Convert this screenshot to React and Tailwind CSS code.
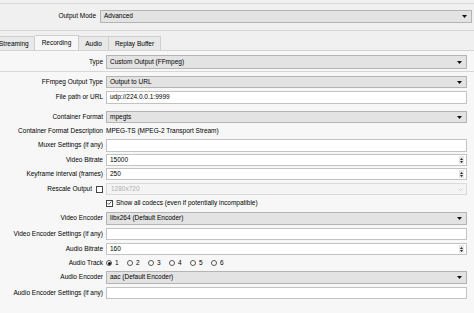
import React from 'react'

const font = { fontFamily: '"Liberation Sans", Arial, sans-serif' }

function Arrow() {
  return (
    <svg width="5" height="3" viewBox="0 0 5 3" className="shrink-0">
      <path d="M0 0h5L2.5 3z" fill="#111" />
    </svg>
  )
}

function Combo({ value, h = 'h-[12px]', pr = 'pr-[4px]' }) {
  return (
    <div className={`flex-1 ${h} flex items-center justify-between bg-[#e3e3e3] border border-[#b4b4b4] pl-[3px] ${pr}`}>
      <span className="leading-none">{value}</span>
      <Arrow />
    </div>
  )
}

function Input({ value = '', h = 'h-[12px]' }) {
  return (
    <div className={`flex-1 ${h} flex items-center bg-white border border-[#c3c3c3] pl-[3px]`}>
      <span className="leading-none">{value}</span>
    </div>
  )
}

function Spin({ value }) {
  return (
    <div className="flex-1 h-[12px] flex items-center justify-between bg-white border border-[#c3c3c3] pl-[3px] pr-[2px]">
      <span className="leading-none">{value}</span>
      <div className="w-[5px] h-[8px] bg-[#e6e6e6] flex flex-col items-center justify-center gap-[1px]">
        <svg width="3" height="2" viewBox="0 0 3 2"><path d="M0 2h3L1.5 0z" fill="#222" /></svg>
        <svg width="3" height="2" viewBox="0 0 3 2"><path d="M0 0h3L1.5 2z" fill="#222" /></svg>
      </div>
    </div>
  )
}

function Row({ label, mt, h = 'h-[12px]', children }) {
  return (
    <div className={`flex items-center ${mt} ${h}`}>
      <div className="w-[106px] shrink-0 text-right pr-[3px] leading-none whitespace-nowrap">{label}</div>
      <div className="flex-1 flex items-center h-full mr-[7px]">{children}</div>
    </div>
  )
}

function Check({ checked }) {
  return (
    <div className="w-[7px] h-[7px] bg-white border border-[#444] flex items-center justify-center shrink-0">
      {checked && (
        <svg width="6" height="6" viewBox="0 0 6 6">
          <path d="M0.8 3.2 2.3 4.7 5.2 1.2" fill="none" stroke="#222" strokeWidth="0.9" />
        </svg>
      )}
    </div>
  )
}

function Radio({ on, label }) {
  return (
    <div className="flex items-center w-[21px]">
      <div className="w-[6px] h-[6px] rounded-full border border-[#555] bg-white flex items-center justify-center shrink-0">
        {on && <div className="w-[3px] h-[3px] rounded-full bg-[#111]" />}
      </div>
      <span className="ml-[3px] leading-none">{label}</span>
    </div>
  )
}

export default function App() {
  return (
    <div className="w-[474px] h-[313px] overflow-hidden bg-[#f0f0f0] text-[6.5px] text-black" style={font}>
      <div className="h-[4px] border-b border-[#d9d9d9]" />
      <div className="flex items-center mt-[6px] h-[13px]">
        <div className="w-[100px] shrink-0 text-right pr-[4px] leading-none">Output Mode</div>
        <div className="flex-1 flex h-full mr-[2px]">
          <Combo value="Advanced" h="h-[13px]" pr="pr-[4px]" />
        </div>
      </div>
      <div className="mt-[7px] h-[1px] bg-[#d6d6d6]" />

      <div className="mt-[4px] flex items-end h-[15px] -ml-[4px]">
        <div className="h-[14px] pl-[2px] pr-[5px] flex items-center bg-[#e8e8e8] border border-[#cfcfcf] border-b-0">Streaming</div>
        <div className="h-[15px] px-[7px] flex items-center bg-[#f7f7f7] border border-[#cfcfcf] border-b-0 border-l-0">Recording</div>
        <div className="h-[14px] px-[6px] flex items-center bg-[#e8e8e8] border border-[#cfcfcf] border-b-0 border-l-0">Audio</div>
        <div className="h-[14px] px-[6px] flex items-center bg-[#e8e8e8] border border-[#cfcfcf] border-b-0 border-l-0">Replay Buffer</div>
      </div>

      <div className="bg-[#f7f7f7] border-t border-[#d3d3d3] h-[263px]">
        <Row label="Type" mt="mt-[4px]" h="h-[14px]">
          <Combo value="Custom Output (FFmpeg)" h="h-[14px]" />
        </Row>
        <div className="mt-[2px] h-[1px] bg-[#d6d6d6]" />

        <Row label="FFmpeg Output Type" mt="mt-[4px]">
          <Combo value="Output to URL" />
        </Row>
        <Row label="File path or URL" mt="mt-[3px]" h="h-[13px]">
          <Input value="udp://224.0.0.1:9999" h="h-[13px]" />
        </Row>
        <Row label="Container Format" mt="mt-[7px]">
          <Combo value="mpegts" />
        </Row>
        <Row label="Container Format Description" mt="mt-[2px]">
          <span className="leading-none">MPEG-TS (MPEG-2 Transport Stream)</span>
        </Row>
        <Row label="Muxer Settings (if any)" mt="mt-[2px]" h="h-[13px]">
          <Input h="h-[13px]" />
        </Row>
        <Row label="Video Bitrate" mt="mt-[2px]">
          <Spin value="15000" />
        </Row>
        <Row label="Keyframe interval (frames)" mt="mt-[2px]">
          <Spin value="250" />
        </Row>
        <div className="flex items-center mt-[3px] h-[12px]">
          <div className="w-[106px] shrink-0 flex items-center justify-end pr-[3px]">
            <span className="leading-none mr-[4px]">Rescale Output</span>
            <Check />
          </div>
          <div className="flex-1 flex items-center h-full mr-[7px]">
            <div className="flex-1 h-[12px] flex items-center justify-between bg-[#f4f4f4] border border-[#dadada] pl-[4px] pr-[3px]">
              <span className="leading-none text-[#b0b0b0]">1280x720</span>
              <svg width="5" height="3" viewBox="0 0 5 3"><path d="M0.5 0.5 2.5 2.5 4.5 0.5" fill="none" stroke="#c4c4c4" strokeWidth="0.7" /></svg>
            </div>
          </div>
        </div>
        <Row label="" mt="mt-[2px]">
          <Check checked />
          <span className="leading-none ml-[3px]">Show all codecs (even if potentially incompatible)</span>
        </Row>
        <Row label="Video Encoder" mt="mt-[3px]" h="h-[13px]">
          <Combo value="libx264 (Default Encoder)" h="h-[13px]" />
        </Row>
        <Row label="Video Encoder Settings (if any)" mt="mt-[3px]">
          <Input />
        </Row>
        <Row label="Audio Bitrate" mt="mt-[3px]">
          <Spin value="160" />
        </Row>
        <Row label="Audio Track" mt="mt-[2px]">
          {[1, 2, 3, 4, 5, 6].map((n) => (
            <Radio key={n} on={n === 1} label={n} />
          ))}
        </Row>
        <Row label="Audio Encoder" mt="mt-[2px]" h="h-[13px]">
          <Combo value="aac (Default Encoder)" h="h-[13px]" />
        </Row>
        <Row label="Audio Encoder Settings (if any)" mt="mt-[3px]">
          <Input />
        </Row>
      </div>
    </div>
  )
}
